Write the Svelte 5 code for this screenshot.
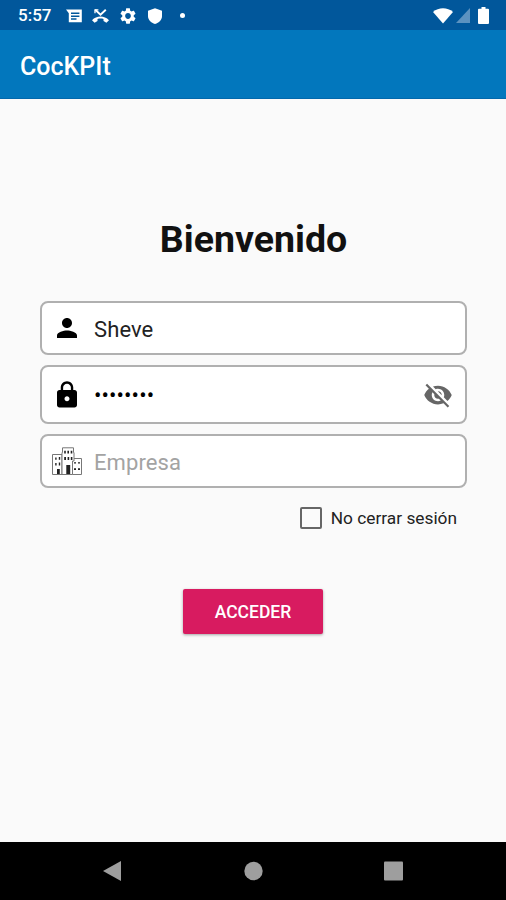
<script>
    let user = $state("Sheve");
    let password = $state("cockpit1");
    let company = $state("");
    let keepSession = $state(false);
    let showPassword = $state(false);
</script>

<div class="screen">
    <div class="status-bar">
        <span class="clock">5:57</span>
        <svg class="status-icon message" viewBox="0 0 17 14">
            <path fill-rule="evenodd" d="M0 .5H15.8V13.2H2.8V4.2ZM5 3.6V5.1H13.4V3.6ZM5 6.4V7.9H13.4V6.4ZM5 9.2V10.7H10.5V9.2Z" />
        </svg>
        <svg class="status-icon missed" viewBox="0 0 17 14">
            <path d="M3.2 .8L8.5 5.8L13.8 .8" fill="none" stroke="white" stroke-width="1.9" />
            <path d="M3 4.2V.9H6.4" fill="none" stroke="white" stroke-width="1.3" />
            <path d="M0 11.2C4.6 6.2 12.4 6.2 17 11.2L14.4 13.8L11.5 12V10C9.5 9.4 7.5 9.4 5.5 10V12L2.6 13.8Z" />
        </svg>
        <svg class="status-icon gear" viewBox="2 2 20 20">
            <path d="M19.14 12.94c.04-.3.06-.61.06-.94 0-.32-.02-.64-.07-.94l2.03-1.58c.18-.14.23-.41.12-.61l-1.92-3.32c-.12-.22-.37-.29-.59-.22l-2.39.96c-.5-.38-1.03-.7-1.62-.94l-.36-2.54c-.04-.24-.24-.41-.48-.41h-3.84c-.24 0-.43.17-.47.41l-.36 2.54c-.59.24-1.13.57-1.62.94l-2.39-.96c-.22-.08-.47 0-.59.22L2.74 8.87c-.12.21-.08.47.12.61l2.03 1.58c-.05.3-.09.63-.09.94s.02.64.07.94l-2.03 1.58c-.18.14-.23.41-.12.61l1.92 3.32c.12.22.37.29.59.22l2.39-.96c.5.38 1.03.7 1.62.94l.36 2.54c.05.24.24.41.48.41h3.84c.24 0 .44-.17.47-.41l.36-2.54c.59-.24 1.13-.56 1.62-.94l2.39.96c.22.08.47 0 .59-.22l1.92-3.32c.12-.22.07-.47-.12-.61l-2.01-1.58zM12 15.6c-1.98 0-3.6-1.62-3.6-3.6s1.62-3.6 3.6-3.6 3.6 1.62 3.6 3.6-1.62 3.6-3.6 3.6z" />
        </svg>
        <svg class="status-icon shield" viewBox="0 0 14 16">
            <path d="M7 .2L14 2.8V8C14 11.8 11 14.8 7 16C3 14.8 0 11.8 0 8V2.8Z" />
        </svg>
        <span class="dot"></span>
        <svg class="status-icon wifi" viewBox="0 0 20 16">
            <path d="M0 4C5.5-1 14.5-1 20 4L10 15.6Z" />
        </svg>
        <svg class="status-icon signal" viewBox="0 0 14 15">
            <path d="M14 0V15H0Z" />
        </svg>
        <svg class="status-icon battery" viewBox="0 0 11 17">
            <path d="M3.5 0H7.5V1.8H10A1 1 0 0 1 11 2.8V16A1 1 0 0 1 10 17H1A1 1 0 0 1 0 16V2.8A1 1 0 0 1 1 1.8H3.5Z" />
        </svg>
    </div>

    <header class="app-bar">CocKPIt</header>

    <main>
        <h1>Bienvenido</h1>

        <label class="field">
            <svg class="field-icon" viewBox="0 0 24 24">
                <path d="M12 12c2.21 0 4-1.79 4-4s-1.79-4-4-4-4 1.79-4 4 1.79 4 4 4zm0 2c-2.67 0-8 1.34-8 4v2h16v-2c0-2.66-5.33-4-8-4z" />
            </svg>
            <input type="text" bind:value={user}>
        </label>

        <div class="field tall">
            <svg class="field-icon" viewBox="0 0 24 24">
                <path d="M18 8h-1V6c0-2.76-2.24-5-5-5S7 3.24 7 6v2H6c-1.1 0-2 .9-2 2v10c0 1.1.9 2 2 2h12c1.1 0 2-.9 2-2V10c0-1.1-.9-2-2-2zm-6 9c-1.1 0-2-.9-2-2s.9-2 2-2 2 .9 2 2-.9 2-2 2zm3.1-9H8.9V6c0-1.71 1.39-3.1 3.1-3.1 1.71 0 3.1 1.39 3.1 3.1v2z" />
            </svg>
            <input class="password" type={showPassword ? "text" : "password"} bind:value={password} aria-label="Contraseña">
            <button class="eye" type="button" aria-label="Mostrar contraseña" onclick={() => showPassword = !showPassword}>
                <svg viewBox="0 0 24 24">
                    <path d="M12 7c2.76 0 5 2.24 5 5 0 .65-.13 1.26-.36 1.83l2.92 2.92c1.51-1.26 2.7-2.89 3.43-4.75-1.73-4.39-6-7.5-11-7.5-1.4 0-2.74.25-3.98.7l2.16 2.16C10.74 7.13 11.35 7 12 7zM2 4.27l2.28 2.28.46.46C3.08 8.3 1.78 10.02 1 12c1.73 4.39 6 7.5 11 7.5 1.55 0 3.03-.3 4.38-.84l.42.42L19.73 22 21 20.73 3.27 3 2 4.27zM7.53 9.8l1.55 1.55c-.05.21-.08.43-.08.65 0 1.66 1.34 3 3 3 .22 0 .44-.03.65-.08l1.55 1.55c-.67.33-1.41.53-2.2.53-2.76 0-5-2.24-5-5 0-.79.2-1.53.53-2.2zm4.31-.78l3.15 3.15.02-.16c0-1.66-1.34-3-3-3l-.17.01z" />
                </svg>
            </button>
        </div>

        <label class="field">
            <svg class="field-icon building" viewBox="0 0 30 28">
                <g fill="white" stroke="#777" stroke-width="1">
                    <path d="M.5 7.5H10V27.5H.5Z" />
                    <path d="M20.5 11.5H29.5V27.5H20.5Z" />
                    <path d="M10 27.5V5.5H10.5V.8H21.5V5.5H22V14H20.5V27.5Z" />
                </g>
                <g fill="#222">
                    <path d="M12.2 3.8H13.8V6.5H12.2ZM15.4 3.8H17V6.5H15.4ZM18.7 3.8H20.3V6.5H18.7Z" />
                    <path d="M12.2 10H14V13H12.2ZM15.6 10H17.2V13H15.6ZM18.8 10H20.4V13H18.8Z" />
                    <path d="M3.2 10.5H4.6V12.7H3.2ZM6.8 10H8.2V12.7H6.8ZM3.2 16H4.6V18.5H3.2ZM6.8 15.5H8.2V18.5H6.8Z" />
                    <path d="M22 15.2H24V16.6H22ZM26 15.2H28V16.6H26ZM22 21.2H24V23H22ZM26 21.2H28V23H26Z" />
                    <path d="M5 22H7.8V27H5ZM14.3 18H18.2V27H14.3Z" />
                </g>
            </svg>
            <input type="text" placeholder="Empresa" bind:value={company}>
        </label>

        <label class="keep">
            <input type="checkbox" bind:checked={keepSession}>
            <span>No cerrar sesión</span>
        </label>

        <button class="submit" type="button">ACCEDER</button>
    </main>

    <nav class="nav-bar">
        <svg viewBox="0 0 20 22"><path d="M19 1V21L1 11Z" /></svg>
        <svg viewBox="0 0 20 22"><circle cx="10.5" cy="11" r="9.2" /></svg>
        <svg viewBox="0 0 20 22"><rect x="0" y="1.5" width="19" height="19" rx="1" /></svg>
    </nav>
</div>

<style>
    :global(body){
        background-color: #fafafa;
    }

    .screen{
        /* display */
        display: flex;
        flex-direction: column;

        /* size */
        width: 506px;
        height: 900px;

        /* design */
        background-color: #fafafa;
        font-family: Roboto, sans-serif;
        color: #111;
        overflow: hidden;
    }

    .status-bar{
        box-sizing: border-box;
        display: flex;
        align-items: center;
        height: 30px;
        padding: 1px 17px 0 18px;
        background-color: #01579b;
        color: white;
    }

    .clock{
        width: 48px;
        padding-bottom: 2px;
        font-size: 17px;
        font-weight: 500;
        line-height: 28px;
    }

    .status-icon{
        flex: none;
        fill: white;
    }

    .message{
        width: 17px;
        height: 14px;
        margin-right: 9px;
    }

    .missed{
        width: 17px;
        height: 14px;
        margin-right: 11px;
    }

    .gear{
        width: 16px;
        height: 16px;
        margin-right: 12px;
    }

    .shield{
        width: 14px;
        height: 16px;
    }

    .dot{
        width: 5px;
        height: 5px;
        margin-left: 18px;
        border-radius: 50%;
        background-color: white;
    }

    .wifi{
        width: 20px;
        height: 16px;
        margin-left: auto;
        margin-right: 3px;
    }

    .signal{
        width: 14px;
        height: 15px;
        margin-right: 8px;
        fill: #5c92c0;
    }

    .battery{
        width: 11px;
        height: 17px;
    }

    .app-bar{
        box-sizing: border-box;
        height: 69px;
        padding: 2px 20px 0;
        border-bottom: 1px solid #0268ac;
        background-color: #0277bd;
        color: white;
        font-size: 25px;
        font-weight: 500;
        line-height: 69px;
    }

    main{
        display: flex;
        flex: 1;
        flex-direction: column;
        padding: 0 39px 0 40px;
    }

    h1{
        margin: 118px 0 40px;
        font-size: 37.5px;
        font-weight: 700;
        line-height: 44px;
        text-align: center;
    }

    .field{
        /* size */
        box-sizing: border-box;
        height: 54px;
        margin-bottom: 10px;
        padding: 0 12px 0 9.5px;

        /* display */
        display: flex;
        align-items: center;

        /* design */
        border: 2px solid #b0b0b0;
        border-radius: 8px;
        background-color: white;
    }

    .field.tall{
        height: 59px;
    }

    .field-icon{
        flex: none;
        width: 30px;
        height: 30px;
        margin-right: 12.5px;
    }

    .field-icon.building{
        height: 28px;
    }

    .field input{
        flex: 1;
        min-width: 0;
        height: 40px;
        padding: 2px 0 0;
        border: none;
        outline: none;
        background: transparent;
        color: #222;
        font-family: inherit;
        font-size: 22px;
        letter-spacing: 0.1px;
    }

    .field input::placeholder{
        color: #a3a3a3;
        opacity: 1;
    }

    .field .password{
        color: black;
    }

    .eye{
        width: 30px;
        height: 30px;
        padding: 0;
        border: none;
        background: none;
        fill: #666;
    }

    .eye svg{
        display: block;
    }

    .keep{
        display: flex;
        align-items: center;
        align-self: flex-end;
        gap: 9px;
        height: 22px;
        margin: 9px 10px 0 0;
        font-size: 17.3px;
        color: #222;
    }

    .keep input{
        appearance: none;
        box-sizing: border-box;
        width: 22px;
        height: 22px;
        margin: 0;
        border: 2px solid #666;
        border-radius: 2px;
    }

    .keep input:checked{
        background-color: #d81b60;
    }

    .submit{
        align-self: center;
        width: 140px;
        height: 45px;
        margin-top: 60px;
        margin-right: 1px;
        padding: 1px 0 0;
        border: none;
        border-radius: 2px;
        background-color: #d81b60;
        box-shadow: 0 1px 3px rgba(0, 0, 0, 0.35);
        color: white;
        font-family: inherit;
        font-size: 17.5px;
        font-weight: 500;
    }

    .nav-bar{
        box-sizing: border-box;
        display: flex;
        align-items: center;
        justify-content: space-between;
        height: 58px;
        padding: 0 102px;
        background-color: black;
    }

    .nav-bar svg{
        width: 20px;
        height: 22px;
        fill: #9e9e9e;
    }
</style>
